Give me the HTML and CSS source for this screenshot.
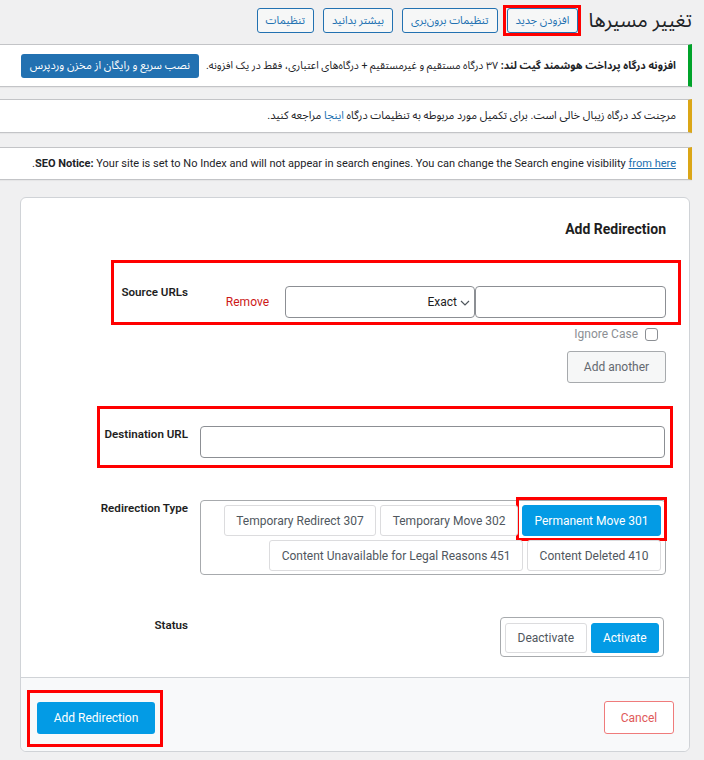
FILE: index.html
```html
<!DOCTYPE html>
<html lang="fa" dir="rtl">
<head>
<meta charset="utf-8">
<title>تغییر مسیرها</title>
<link rel="stylesheet" href="styles.css">
</head>
<body>
<div class="wrap">
  <div class="header">
    <h1 class="page-title">تغییر مسیرها</h1>
    <a class="page-action">افزودن جدید<span class="mark mark-head"></span></a>
    <a class="page-action">تنظیمات برون‌بری</a>
    <a class="page-action">بیشتر بدانید</a>
    <a class="page-action">تنظیمات</a>
  </div>

  <div class="notice notice-success">
    <p class="notice-text notice-text-1"><b>افزونه درگاه پرداخت هوشمند گیت لند:</b> ۳۷ درگاه مستقیم و غیرمستقیم + درگاه‌های اعتباری، فقط در یک افزونه.</p>
    <a class="btn-wp">نصب سریع و رایگان از مخزن وردپرس</a>
  </div>

  <div class="notice notice-warning notice-2">
    <p class="notice-text">مرچنت کد درگاه زیبال خالی است. برای تکمیل مورد مربوطه به تنظیمات درگاه <a class="link">اینجا</a> مراجعه کنید.</p>
  </div>

  <div class="notice notice-warning notice-3">
    <p class="notice-text en"><b>SEO Notice:</b> Your site is set to No Index and will not appear in search engines. You can change the Search engine visibility <a class="link underline">from here</a>.</p>
  </div>
</div>

<div class="card" dir="ltr">
  <div class="card-body">
    <h2 class="card-title">Add Redirection</h2>

    <div class="row row-source">
      <div class="label label-source">Source URLs</div>
      <div class="field field-rtl">
        <div class="text-input input-half"></div>
        <div class="select-box"><span>Exact</span>
          <svg class="chev" width="10" height="6" viewBox="0 0 10 6"><path d="M1 1l4 4 4-4" fill="none" stroke="#50575e" stroke-width="1.2"/></svg>
        </div>
        <a class="remove">Remove</a>
      </div>
      <span class="mark mark-source"></span>
    </div>

    <div class="row-sub row-ignore">
      <span class="ignore-text">Ignore Case</span>
      <span class="checkbox"></span>
    </div>

    <div class="row-sub row-another">
      <a class="btn-secondary">Add another</a>
    </div>

    <div class="row row-dest">
      <div class="label">Destination URL</div>
      <div class="field">
        <div class="text-input input-full"></div>
      </div>
      <span class="mark mark-dest"></span>
    </div>

    <div class="row row-type">
      <div class="label">Redirection Type</div>
      <div class="field">
        <div class="btn-group" dir="rtl">
          <a class="opt opt-active">Permanent Move 301<span class="mark mark-301"></span></a>
          <a class="opt">Temporary Move 302</a>
          <a class="opt">Temporary Redirect 307</a>
          <a class="opt">Content Deleted 410</a>
          <a class="opt">Content Unavailable for Legal Reasons 451</a>
        </div>
      </div>
    </div>

    <div class="row row-status">
      <div class="label">Status</div>
      <div class="field field-status">
        <div class="btn-group btn-group-status" dir="rtl">
          <a class="opt opt-active">Activate</a>
          <a class="opt">Deactivate</a>
        </div>
      </div>
    </div>
  </div>

  <div class="card-footer">
    <a class="btn-primary">Add Redirection<span class="mark mark-submit"></span></a>
    <a class="btn-cancel">Cancel</a>
  </div>
</div>
</body>
</html>
```

FILE: styles.css
```css
* { box-sizing: border-box; }

html, body {
  margin: 0;
  padding: 0;
}

body {
  background: #f0f0f1;
  color: #1d2327;
  font-family: Roboto, "Noto Sans Arabic", "DejaVu Sans", sans-serif;
  font-size: 13px;
  width: 704px;
  height: 760px;
  overflow: hidden;
}

a { text-decoration: none; }

.wrap {
  padding-right: 12px;
}

.mark {
  position: absolute;
  border: 3px solid #ff0000;
  pointer-events: none;
}

/* header */
.header {
  display: flex;
  align-items: center;
  gap: 9px;
  padding-top: 8px;
  height: 33px;
}

.page-title {
  margin: 0 0 0 1px;
  font-size: 20px;
  font-weight: 400;
  line-height: 25px;
  color: #1d2327;
}

.page-action {
  position: relative;
  display: inline-flex;
  align-items: center;
  height: 25px;
  padding: 0 8px;
  border: 1px solid #2271b1;
  border-radius: 3px;
  background: #f6f7f7;
  color: #2271b1;
  font-size: 11px;
}

.mark-head { left: -5px; right: -4px; top: -4px; bottom: -4px; }

/* notices */
.notice {
  display: flex;
  align-items: center;
  gap: 7px;
  background: #fff;
  border: 1px solid #c3c4c7;
  border-left: 0;
  border-right-width: 4px;
  box-shadow: 0 1px 1px rgba(0,0,0,.04);
  padding: 0 12px 0 0;
  white-space: nowrap;
}

.notice-success {
  border-right-color: #00a32a;
  margin-top: 11px;
  height: 43px;
}

.notice-warning { border-right-color: #dba617; }

.notice-2 { margin-top: 12px; height: 34px; }
.notice-3 { margin-top: 14px; height: 33px; }

.notice-text {
  margin: 0;
  font-size: 11px;
  line-height: 18px;
  color: #1d2327;
}

.notice-text-1 { font-size: 10.6px; }

.notice-text.en { font-size: 11px; }

.link { color: #2271b1; }
.underline { text-decoration: underline; }

.btn-wp {
  display: inline-flex;
  align-items: center;
  height: 24px;
  padding: 0 9px;
  background: #2271b1;
  border-radius: 3px;
  color: #fff;
  font-size: 11px;
}

/* card */
.card {
  margin: 17px 14px 0 20px;
  background: #fff;
  border: 1px solid #d0d3d7;
  border-radius: 6px;
  overflow: visible;
}

.card-body {
  padding: 21px 0 20px 0;
}

.card-title {
  margin: 0 23px 0 0;
  text-align: right;
  font-size: 14px;
  font-weight: 700;
  line-height: 20px;
  color: #1e1e1e;
}

.row {
  position: relative;
  display: grid;
  grid-template-columns: 167px 466px;
  column-gap: 12px;
  padding-right: 23px;
}

.label {
  text-align: right;
  font-size: 11.6px;
  font-weight: 600;
  line-height: 16px;
  color: #1e1e1e;
}

.label-source { margin-top: -2px; }

.field-rtl {
  display: flex;
  direction: rtl;
  align-items: center;
}

.row-source { margin-top: 47px; }

.text-input {
  height: 32px;
  border: 1px solid #8c8f94;
  border-radius: 4px;
  background: #fff;
}

.input-half { width: 191px; }
.input-full { width: 465px; }

.select-box {
  width: 190px;
  height: 32px;
  border: 1px solid #8c8f94;
  border-radius: 4px;
  display: flex;
  align-items: center;
  justify-content: flex-start;
  direction: rtl;
  gap: 3px;
  padding-right: 4px;
  font-size: 12px;
  color: #1e1e1e;
}

.select-box span { order: 2; }
.select-box .chev { order: 1; margin-top: 2px; }

.remove {
  margin-right: 16px;
  color: #cc1818;
  font-size: 12px;
}

.mark-source { left: 90px; right: 8px; top: -26px; bottom: -7px; }

.row-sub {
  display: flex;
  justify-content: flex-end;
  align-items: center;
  padding-right: 23px;
}

.row-ignore {
  margin-top: 9px;
  height: 14px;
  gap: 7px;
  padding-right: 31px;
}

.ignore-text {
  font-size: 12px;
  color: #8c8f94;
}

.checkbox {
  width: 13px;
  height: 13px;
  border: 1px solid #8c8f94;
  border-radius: 3px;
  background: #fff;
}

.row-another { margin-top: 10px; }

.btn-secondary {
  display: inline-flex;
  align-items: center;
  justify-content: center;
  width: 99px;
  height: 32px;
  border: 1px solid #a7aaad;
  border-radius: 3px;
  background: #f6f7f7;
  color: #646970;
  font-size: 12px;
}

.row-dest { margin-top: 43px; }
.mark-dest { left: 76px; right: 16px; top: -20px; bottom: -10px; }

.row-type { margin-top: 42px; }

.btn-group {
  display: flex;
  flex-wrap: wrap;
  gap: 4px;
  padding: 4px 4px 3px 4px;
  border: 1px solid #a7aaad;
  border-radius: 4px;
}

.opt {
  position: relative;
  display: inline-flex;
  align-items: center;
  height: 31px;
  padding: 0 11.5px;
  border: 1px solid #dcdcde;
  border-radius: 3px;
  background: #fff;
  color: #50575e;
  font-size: 12px;
  white-space: nowrap;
}

.opt-active {
  background: #039be5;
  border-color: #039be5;
  color: #fff;
}

.mark-301 { left: -7px; right: -7px; top: -9px; bottom: -6px; }

.row-status { margin-top: 42px; }

.field-status {
  display: flex;
  justify-content: flex-end;
  padding-right: 2px;
}

.btn-group-status {
  padding: 5px 4px 3px 4px;
  height: 40px;
}

.btn-group-status .opt { height: 30px; }

.card-footer {
  display: flex;
  justify-content: space-between;
  align-items: center;
  padding: 23px 15px 17px 16px;
  border-top: 1px solid #d0d3d7;
  background: #f8f9fa;
  border-radius: 0 0 6px 6px;
}

.btn-primary {
  position: relative;
  display: inline-flex;
  align-items: center;
  justify-content: center;
  width: 118px;
  height: 32px;
  background: #039be5;
  border-radius: 3px;
  color: #fff;
  font-size: 12px;
}

.mark-submit { left: -10px; right: -8px; top: -12px; bottom: -13px; }

.btn-cancel {
  display: inline-flex;
  align-items: center;
  justify-content: center;
  width: 70px;
  height: 33px;
  border: 1px solid #ef7b7b;
  border-radius: 3px;
  background: #fff;
  color: #e05a5a;
  font-size: 12px;
}
```
